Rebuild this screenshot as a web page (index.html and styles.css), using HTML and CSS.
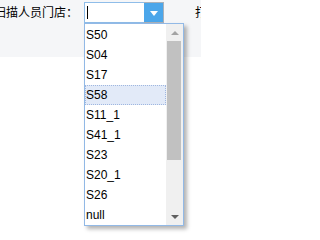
FILE: index.html
```html
<!DOCTYPE html>
<html>
<head>
<meta charset="utf-8">
<link rel="stylesheet" href="styles.css">
</head>
<body>
<div class="toolbar">
  <span class="label">扫描人员门店：</span>
  <div class="combo">
    <div class="input"><span class="caret"></span></div>
    <div class="btn"><span class="tri-white"></span></div>
  </div>
  <span class="label2">打印</span>
</div>
<div class="dropdown">
  <ul class="list">
    <li class="item">S50</li>
    <li class="item">S04</li>
    <li class="item">S17</li>
    <li class="item hover">S58</li>
    <li class="item">S11_1</li>
    <li class="item">S41_1</li>
    <li class="item">S23</li>
    <li class="item">S20_1</li>
    <li class="item">S26</li>
    <li class="item">null</li>
  </ul>
  <div class="scrollbar">
    <div class="arrow-box"><span class="tri-up"></span></div>
    <div class="track"><div class="thumb"></div></div>
    <div class="arrow-box"><span class="tri-down"></span></div>
  </div>
</div>
</body>
</html>
```

FILE: styles.css
```css
html, body {
  margin: 0;
  padding: 0;
  background: #ffffff;
  overflow: hidden;
}
body {
  position: relative;
  width: 201px;
  height: 238px;
  font-family: "Liberation Sans", Arial, sans-serif;
}
.toolbar {
  height: 57px;
  background: #f5f6f8;
  display: flex;
  align-items: flex-start;
  padding-top: 2px;
  box-sizing: border-box;
  white-space: nowrap;
}
.label {
  font-family: "Noto Sans CJK SC", sans-serif;
  font-size: 12px;
  line-height: 20px;
  color: #000;
  margin-left: -6px;
  width: 90px;
  flex: none;
}
.label2 {
  font-family: "Noto Sans CJK SC", sans-serif;
  font-size: 12px;
  line-height: 20px;
  color: #000;
  margin-left: 31px;
  flex: none;
}
.combo {
  display: flex;
  height: 21px;
  flex: none;
}
.input {
  width: 60px;
  height: 21px;
  box-sizing: border-box;
  border: 1px solid #8fbde9;
  border-right: none;
  background: #fff;
  display: flex;
  align-items: center;
  padding-left: 2px;
}
.caret {
  width: 1px;
  height: 13px;
  background: #000;
}
.btn {
  width: 20px;
  height: 21px;
  box-sizing: border-box;
  background: #4ba6ea;
  border: 1px solid #a9b1ba;
  border-left: none;
  display: flex;
  align-items: center;
  justify-content: center;
}
.tri-white {
  width: 0;
  height: 0;
  border-left: 4px solid transparent;
  border-right: 4px solid transparent;
  border-top: 5px solid #ffffff;
  margin-top: 1px;
}
.dropdown {
  position: absolute;
  left: 84px;
  top: 23px;
  width: 100px;
  height: 203px;
  box-sizing: border-box;
  border: 1px solid #92b9e6;
  background: #fff;
  box-shadow: 3px 3px 4px rgba(0, 0, 0, 0.3);
  display: flex;
}
.list {
  list-style: none;
  margin: 0;
  padding: 1px 0 0 0;
  width: 81px;
  flex: none;
}
.item {
  height: 20px;
  line-height: 20px;
  font-size: 12px;
  color: #000;
  padding-left: 1px;
  box-sizing: border-box;
}
.item.hover {
  background: #e2eaf8;
  border: 1px dotted #9fb7e0;
  padding-left: 0;
  line-height: 18px;
}
.scrollbar {
  width: 17px;
  flex: none;
  background: #f0f0f0;
  display: flex;
  flex-direction: column;
}
.arrow-box {
  height: 17px;
  display: flex;
  align-items: center;
  justify-content: center;
  flex: none;
}
.track {
  flex: 1;
  padding: 0 2px 0 1px;
}
.thumb {
  height: 119px;
  background: #c1c1c1;
}
.tri-up {
  width: 0;
  height: 0;
  border-left: 4px solid transparent;
  border-right: 4px solid transparent;
  border-bottom: 4px solid #a3a3a3;
}
.tri-down {
  width: 0;
  height: 0;
  border-left: 4px solid transparent;
  border-right: 4px solid transparent;
  border-top: 4px solid #606060;
}
```
